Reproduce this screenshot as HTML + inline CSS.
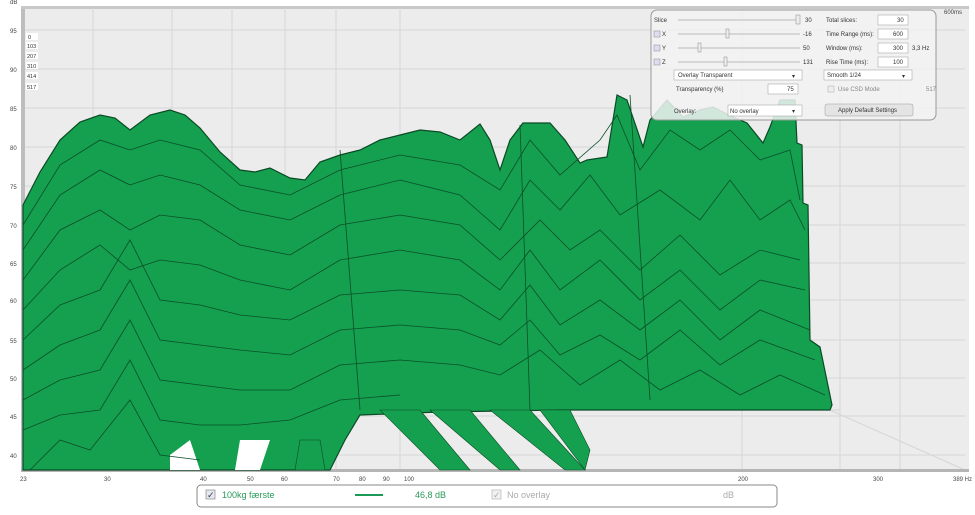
<!DOCTYPE html>
<html><head><meta charset="utf-8"><style>
body{margin:0;width:975px;height:510px;overflow:hidden;background:#fff;font-family:"Liberation Sans",sans-serif}
svg text{font-family:"Liberation Sans",sans-serif}
</style></head><body>
<svg width="975" height="510" viewBox="0 0 975 510" xmlns="http://www.w3.org/2000/svg">
<rect x="0" y="0" width="975" height="510" fill="#fff"/>
<rect x="21" y="8" width="948" height="464" fill="#ececec"/>
<rect x="21" y="8" width="4" height="464" fill="#bdbdbd"/>
<rect x="21" y="6" width="948" height="3" fill="#c8c8c8"/>
<g stroke="#d6d6d6" stroke-width="1">
<line x1="25" y1="30" x2="965" y2="30"/><line x1="25" y1="69" x2="965" y2="69"/><line x1="25" y1="108" x2="965" y2="108"/>
<line x1="25" y1="147" x2="965" y2="147"/><line x1="25" y1="186" x2="965" y2="186"/><line x1="25" y1="225" x2="965" y2="225"/>
<line x1="25" y1="263" x2="965" y2="263"/><line x1="25" y1="300" x2="965" y2="300"/><line x1="25" y1="340" x2="965" y2="340"/>
<line x1="25" y1="378" x2="965" y2="378"/><line x1="25" y1="416" x2="965" y2="416"/><line x1="25" y1="455" x2="965" y2="455"/>
<line x1="93" y1="8" x2="93" y2="470"/><line x1="172" y1="8" x2="172" y2="470"/><line x1="232" y1="8" x2="232" y2="470"/>
<line x1="285" y1="8" x2="285" y2="470"/><line x1="336" y1="8" x2="336" y2="470"/><line x1="400" y1="8" x2="400" y2="470"/>
<line x1="742" y1="8" x2="742" y2="470"/><line x1="840" y1="8" x2="840" y2="470"/><line x1="900" y1="8" x2="900" y2="470"/>
<line x1="830" y1="410" x2="965" y2="470"/><line x1="400" y1="410" x2="840" y2="410"/>
</g>
<rect x="21" y="469" width="948" height="3" fill="#b5b5b5"/>
<g font-size="6" fill="#444">
<text x="10" y="4">dB</text>
<text x="10" y="33">95</text><text x="10" y="72">90</text><text x="10" y="111">85</text><text x="10" y="150">80</text>
<text x="10" y="189">75</text><text x="10" y="228">70</text><text x="10" y="266">65</text><text x="10" y="303">60</text>
<text x="10" y="343">55</text><text x="10" y="381">50</text><text x="10" y="419">45</text><text x="10" y="458">40</text>
<text x="20" y="481">23</text><text x="104" y="481">30</text><text x="200" y="481">40</text><text x="247" y="481">50</text>
<text x="281" y="481">60</text><text x="333" y="481">70</text><text x="359" y="481">80</text><text x="383" y="481">90</text>
<text x="404" y="481">100</text><text x="738" y="481">200</text><text x="873" y="481">300</text><text x="953" y="481">389 Hz</text>
<text x="944" y="14">600ms</text>
</g>
<g font-size="5.5" fill="#333">
<rect x="26" y="33" width="12" height="7" fill="#fff"/><text x="28" y="39">0</text>
<rect x="26" y="42" width="12" height="7" fill="#fff"/><text x="27" y="48">103</text>
<rect x="26" y="52" width="12" height="7" fill="#fff"/><text x="27" y="58">207</text>
<rect x="26" y="62" width="12" height="7" fill="#fff"/><text x="27" y="68">310</text>
<rect x="26" y="72" width="12" height="7" fill="#fff"/><text x="27" y="78">414</text>
<rect x="26" y="83" width="12" height="7" fill="#fff"/><text x="27" y="89">517</text>
</g>
<polygon fill="#14a04f" stroke="#0a4a25" stroke-width="1.2" points="23,205 40,172 60,140 80,122 100,115 115,118 130,130 150,115 170,110 185,115 200,128 220,152 240,170 255,172 270,168 290,178 305,180 320,162 340,155 360,150 380,140 400,135 420,130 440,132 460,140 480,124 490,140 500,170 510,140 523,123 550,123 565,140 580,163 587,160 607,157 617,95 627,100 643,147 650,120 667,100 683,117 700,110 713,107 733,117 747,123 763,143 770,127 780,100 795,100 797,143 802,145 803,203 808,205 810,340 820,347 832,405 830,410 580,410 560,410 440,412 360,415 345,440 330,470 23,470"/>
<g fill="#14a04f" stroke="#0a4a25" stroke-width="0.6">
<polygon points="380,410 420,410 470,470 440,470"/>
<polygon points="430,410 470,410 520,470 500,470"/>
<polygon points="490,410 530,410 585,470 565,470"/>
<polygon points="540,410 570,410 590,450 585,470"/>
<polygon points="300,440 320,440 325,470 295,470"/>
</g>
<g fill="#fff">
<polygon points="240,440 270,440 260,470 235,470"/>
<polygon points="170,455 190,440 200,470 170,470"/>
</g>
<g fill="none" stroke="#0b4f28" stroke-width="0.8">
<polyline points="23,225 60,165 100,140 130,150 160,140 200,150 240,185 290,195 340,170 400,155 460,165 500,190 530,140 560,175 600,140 617,115 640,170 670,130 700,150 730,130 760,160 790,150 800,200"/>
<polyline points="23,250 60,195 100,170 130,185 160,175 200,185 240,210 290,220 340,195 400,180 460,195 500,230 530,180 560,210 590,175 620,215 660,190 700,220 730,180 760,220 790,200 805,230"/>
<polyline points="23,280 60,230 100,210 130,230 160,215 200,220 240,245 290,255 340,225 400,215 460,225 500,260 540,220 570,250 600,230 640,270 680,235 720,275 760,250 800,260"/>
<polyline points="23,310 60,270 100,245 130,270 160,260 200,265 240,280 290,290 340,260 400,250 460,260 500,290 530,250 560,290 600,260 640,300 680,270 720,310 760,280 805,290"/>
<polyline points="23,340 60,305 100,290 130,240 160,300 200,305 240,315 290,320 340,295 400,290 460,295 500,320 530,285 560,325 600,300 640,330 680,300 720,340 760,310 810,330"/>
<polyline points="23,370 60,345 100,330 130,280 160,340 200,345 240,350 290,355 340,330 400,325 460,330 500,345 530,320 560,355 600,335 640,360 680,330 720,365 760,340 815,360"/>
<polyline points="23,400 60,380 100,370 130,320 160,380 200,385 240,390 290,390 340,365 400,360 460,365 500,375 540,350 580,385 620,360 660,390 700,370 740,395 780,375 825,395"/>
<polyline points="23,430 60,415 100,410 130,360 160,420 200,425 240,425 290,420 340,400 400,395"/>
<polyline points="30,470 60,440 90,450 130,400 160,455 200,460"/>
<line x1="340" y1="150" x2="360" y2="410"/><line x1="520" y1="125" x2="530" y2="410"/><line x1="630" y1="95" x2="650" y2="400"/>
</g>
<g>
<rect x="651" y="10" width="285" height="110" rx="6" fill="#f3f3f3" fill-opacity="0.85" stroke="#999"/>
<g font-size="6" fill="#333">
<text x="654" y="22">Slice</text>
<line x1="678" y1="20" x2="800" y2="20" stroke="#bbb"/><rect x="796" y="15" width="4" height="9" fill="#eee" stroke="#888" stroke-width=".5"/><text x="805" y="22">30</text>
<rect x="654" y="31" width="6" height="6" fill="#dde" stroke="#889" stroke-width=".5"/><text x="662" y="36">X</text>
<line x1="678" y1="34" x2="800" y2="34" stroke="#bbb"/><rect x="726" y="29" width="3" height="9" fill="#eee" stroke="#888" stroke-width=".5"/><text x="803" y="36">-16</text>
<rect x="654" y="45" width="6" height="6" fill="#dde" stroke="#889" stroke-width=".5"/><text x="662" y="50">Y</text>
<line x1="678" y1="48" x2="800" y2="48" stroke="#bbb"/><rect x="698" y="43" width="3" height="9" fill="#eee" stroke="#888" stroke-width=".5"/><text x="803" y="50">50</text>
<rect x="654" y="59" width="6" height="6" fill="#dde" stroke="#889" stroke-width=".5"/><text x="662" y="64">Z</text>
<line x1="678" y1="62" x2="800" y2="62" stroke="#bbb"/><rect x="724" y="57" width="3" height="9" fill="#eee" stroke="#888" stroke-width=".5"/><text x="803" y="64">131</text>
<rect x="674" y="70" width="128" height="10" fill="#fff" stroke="#999" stroke-width=".5"/><text x="678" y="77">Overlay Transparent</text><text x="792" y="78">▾</text>
<text x="676" y="91">Transparency (%)</text>
<rect x="768" y="84" width="30" height="10" fill="#fff" stroke="#999" stroke-width=".5"/><text x="787" y="91">75</text>
<text x="674" y="113">Overlay:</text>
<rect x="728" y="105" width="74" height="11" fill="#fff" stroke="#999" stroke-width=".5"/><text x="730" y="113">No overlay</text><text x="792" y="113">▾</text>
<text x="826" y="22">Total slices:</text><rect x="878" y="15" width="30" height="10" fill="#fff" stroke="#999" stroke-width=".5"/><text x="897" y="22">30</text>
<text x="826" y="36">Time Range (ms):</text><rect x="878" y="29" width="30" height="10" fill="#fff" stroke="#999" stroke-width=".5"/><text x="893" y="36">600</text>
<text x="826" y="50">Window (ms):</text><rect x="878" y="43" width="30" height="10" fill="#fff" stroke="#999" stroke-width=".5"/><text x="893" y="50">300</text><text x="912" y="50">3,3 Hz</text>
<text x="826" y="64">Rise Time (ms):</text><rect x="878" y="57" width="30" height="10" fill="#fff" stroke="#999" stroke-width=".5"/><text x="893" y="64">100</text>
<rect x="824" y="70" width="88" height="10" fill="#fff" stroke="#999" stroke-width=".5"/><text x="827" y="77">Smooth 1/24</text><text x="902" y="78">▾</text>
<rect x="828" y="86" width="6" height="6" fill="#eee" stroke="#aaa" stroke-width=".5"/><text x="838" y="91" fill="#888">Use CSD Mode</text><text x="926" y="91" fill="#888">517</text>
<rect x="825" y="104" width="88" height="12" rx="2" fill="#e4e4e4" stroke="#999" stroke-width=".5"/><text x="838" y="112">Apply Default Settings</text>
</g>
</g>
<rect x="197" y="485" width="580" height="22" rx="4" fill="#fff" stroke="#888"/>
<rect x="206" y="490" width="9" height="9" fill="#e6e8f0" stroke="#777" stroke-width=".6"/><text x="207" y="498" font-size="9" fill="#335">✓</text>
<text x="222" y="498" font-size="9" fill="#2a9a5a">100kg færste</text>
<line x1="355" y1="495" x2="383" y2="495" stroke="#1a9a55" stroke-width="2"/>
<text x="415" y="498" font-size="9" fill="#2a9a5a">46,8 dB</text>
<rect x="492" y="490" width="9" height="9" fill="#f2f2f2" stroke="#aaa" stroke-width=".6"/><text x="493" y="498" font-size="9" fill="#aaa">✓</text>
<text x="507" y="498" font-size="9" fill="#aaa">No overlay</text>
<text x="723" y="498" font-size="9" fill="#aaa">dB</text>
</svg>
</body></html>
